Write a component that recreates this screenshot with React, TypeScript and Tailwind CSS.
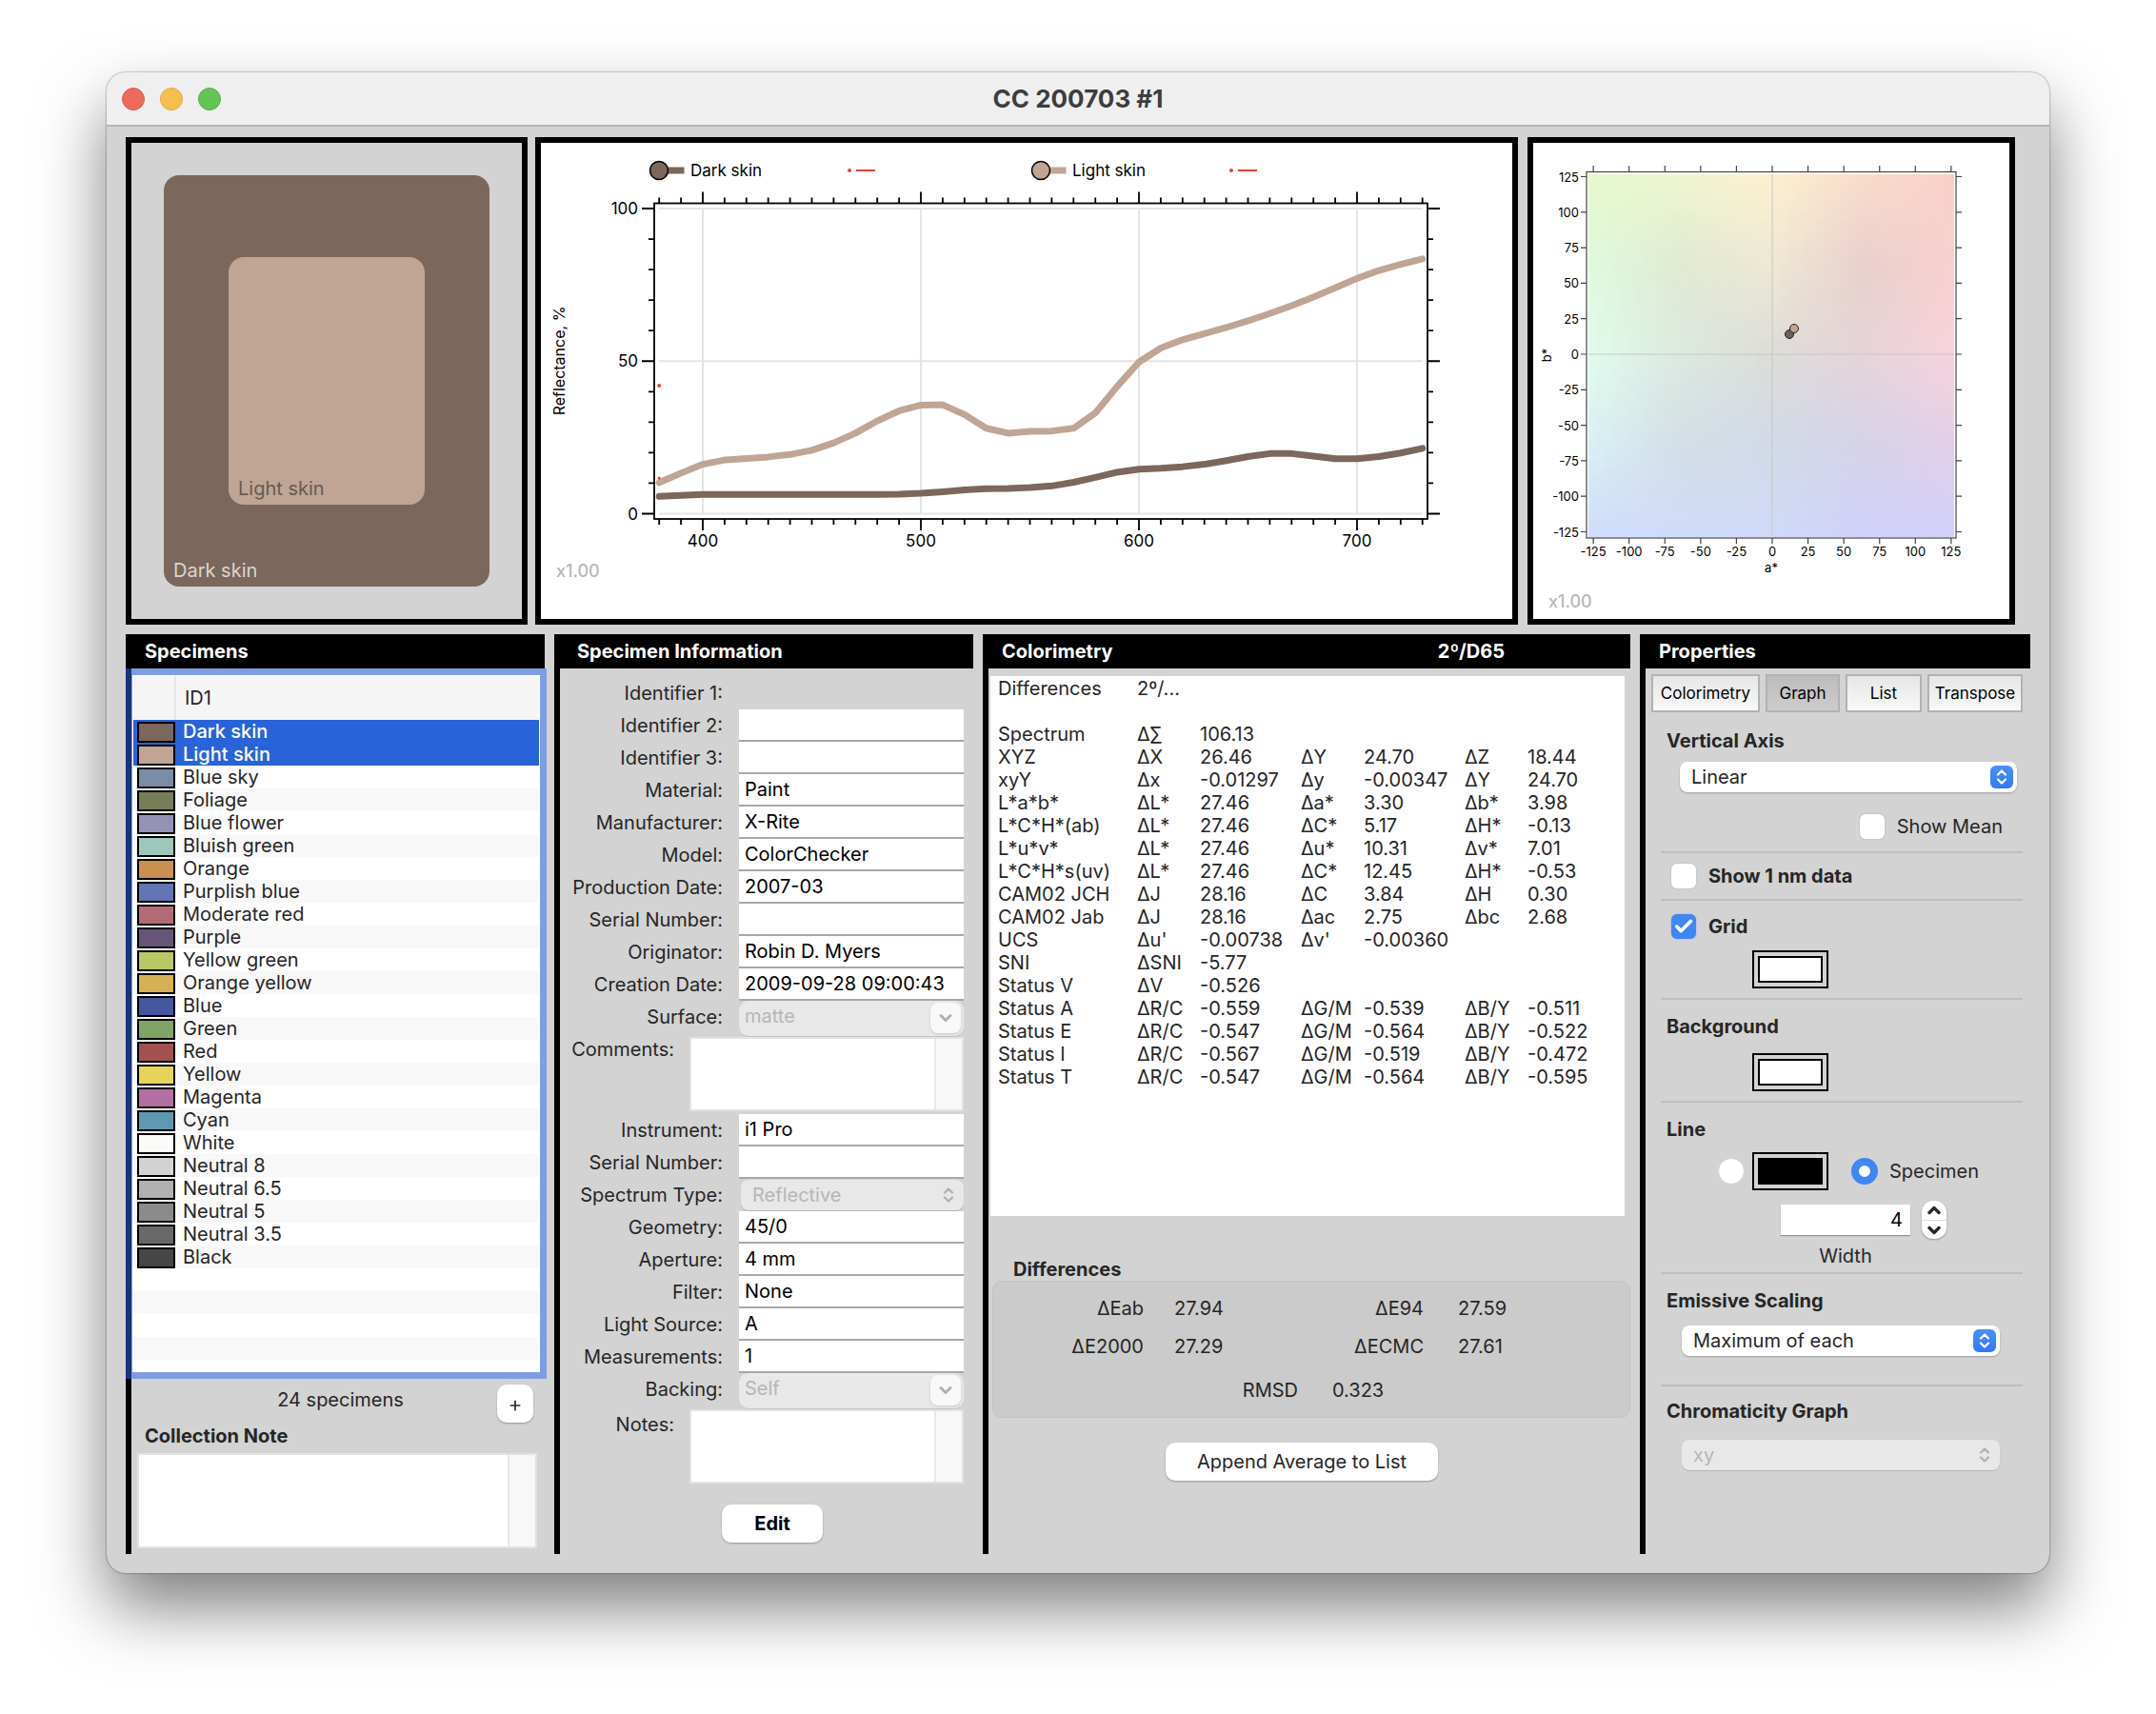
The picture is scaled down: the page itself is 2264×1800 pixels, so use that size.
import { ReactNode, useState } from "react";
import { Check, ChevronDown, ChevronUp, Plus } from "lucide-react";
import clsx from "clsx";

type Specimen = { name: string; color: string };

const specimens: Specimen[] = [
  { name: "Dark skin", color: "#7b675b" },
  { name: "Light skin", color: "#c0a594" },
  { name: "Blue sky", color: "#7b8ca6" },
  { name: "Foliage", color: "#767e59" },
  { name: "Blue flower", color: "#9592b6" },
  { name: "Bluish green", color: "#9dc7ba" },
  { name: "Orange", color: "#cb9050" },
  { name: "Purplish blue", color: "#6375b4" },
  { name: "Moderate red", color: "#b36c76" },
  { name: "Purple", color: "#665578" },
  { name: "Yellow green", color: "#b9c766" },
  { name: "Orange yellow", color: "#d5b055" },
  { name: "Blue", color: "#45579f" },
  { name: "Green", color: "#81a366" },
  { name: "Red", color: "#a15351" },
  { name: "Yellow", color: "#e6d45b" },
  { name: "Magenta", color: "#b170a1" },
  { name: "Cyan", color: "#6097b3" },
  { name: "White", color: "#fafaf8" },
  { name: "Neutral 8", color: "#d3d3d3" },
  { name: "Neutral 6.5", color: "#b1b1b1" },
  { name: "Neutral 5", color: "#8b8b8b" },
  { name: "Neutral 3.5", color: "#696969" },
  { name: "Black", color: "#464646" },
];

const colorimetry: string[][] = [
  ["Differences", "2º/..."],
  [],
  ["Spectrum", "Δ∑", "106.13"],
  ["XYZ", "ΔX", "26.46", "ΔY", "24.70", "ΔZ", "18.44"],
  ["xyY", "Δx", "-0.01297", "Δy", "-0.00347", "ΔY", "24.70"],
  ["L*a*b*", "ΔL*", "27.46", "Δa*", "3.30", "Δb*", "3.98"],
  ["L*C*H*(ab)", "ΔL*", "27.46", "ΔC*", "5.17", "ΔH*", "-0.13"],
  ["L*u*v*", "ΔL*", "27.46", "Δu*", "10.31", "Δv*", "7.01"],
  ["L*C*H*s(uv)", "ΔL*", "27.46", "ΔC*", "12.45", "ΔH*", "-0.53"],
  ["CAM02 JCH", "ΔJ", "28.16", "ΔC", "3.84", "ΔH", "0.30"],
  ["CAM02 Jab", "ΔJ", "28.16", "Δac", "2.75", "Δbc", "2.68"],
  ["UCS", "Δu'", "-0.00738", "Δv'", "-0.00360"],
  ["SNI", "ΔSNI", "-5.77"],
  ["Status V", "ΔV", "-0.526"],
  ["Status A", "ΔR/C", "-0.559", "ΔG/M", "-0.539", "ΔB/Y", "-0.511"],
  ["Status E", "ΔR/C", "-0.547", "ΔG/M", "-0.564", "ΔB/Y", "-0.522"],
  ["Status I", "ΔR/C", "-0.567", "ΔG/M", "-0.519", "ΔB/Y", "-0.472"],
  ["Status T", "ΔR/C", "-0.547", "ΔG/M", "-0.564", "ΔB/Y", "-0.595"],
];

// Reflectance in percent, 380 to 730 nm in steps of 10 nm.
const darkSkin = [
  5.7, 6, 6.3, 6.3, 6.3, 6.3, 6.3, 6.3, 6.3, 6.3, 6.3, 6.4, 6.7, 7.2, 7.8, 8.2, 8.3, 8.6, 9.1, 10.3,
  11.9, 13.6, 14.6, 14.9, 15.4, 16.2, 17.4, 18.7, 19.7, 19.7, 18.9, 18, 18, 18.7, 19.9, 21.4,
];
const lightSkin = [
  10.2, 13.3, 16.2, 17.6, 18.1, 18.6, 19.4, 20.8, 23.2, 26.4, 30.4, 33.7, 35.6, 35.7, 32.5, 28, 26.4,
  27, 27.1, 28, 33, 41.7, 49.7, 54.3, 57, 59, 61, 63.2, 65.6, 68.2, 71, 74, 77.1, 79.7, 81.7, 83.5,
];

// Colours of the a*b* plane at 128, 64, 0, -64, -128 on each axis.
const plane = [
  [[230, 248, 204], [238, 246, 208], [253, 240, 208], [249, 220, 203], [248, 208, 200]],
  [[223, 250, 222], [224, 234, 210], [238, 232, 212], [233, 208, 204], [248, 208, 207]],
  [[224, 252, 236], [220, 233, 224], [220, 220, 217], [229, 212, 217], [248, 210, 220]],
  [[217, 240, 245], [211, 222, 230], [210, 218, 232], [213, 211, 232], [226, 207, 232]],
  [[208, 220, 250], [208, 219, 249], [208, 218, 248], [208, 208, 249], [210, 208, 251]],
];

function planeColor(u: number, v: number) {
  const x = Math.min(u * 4, 3.999);
  const y = Math.min(v * 4, 3.999);
  const col = Math.floor(x);
  const row = Math.floor(y);
  const fx = x - col;
  const fy = y - row;
  const mix = [0, 1, 2].map((c) => {
    const top = plane[row][col][c] * (1 - fx) + plane[row][col + 1][c] * fx;
    const bottom = plane[row + 1][col][c] * (1 - fx) + plane[row + 1][col + 1][c] * fx;
    return Math.round(top * (1 - fy) + bottom * fy);
  });
  return `rgb(${mix.join(",")})`;
}

function range(from: number, to: number, step: number) {
  const out: number[] = [];
  for (let n = from; n <= to; n += step) out.push(n);
  return out;
}

function SpectrumChart() {
  const px = (nm: number) => 170 + (nm - 400) * 2.29;
  const py = (value: number) => 389.5 - value * 3.205;
  const line = (values: number[]) => values.map((v, i) => `${px(380 + i * 10)},${py(v)}`).join(" ");
  const legend = [
    { ...specimens[0], x: 124 },
    { ...specimens[1], x: 525 },
  ];

  return (
    <svg className="block h-full w-full" viewBox="0 0 1020 500" role="img" aria-label="Reflectance graph">
      <g stroke="#e4e4e4" strokeWidth="2">
        {[400, 500, 600, 700].map((nm) => (
          <line key={nm} x1={px(nm)} x2={px(nm)} y1={py(100)} y2={py(0)} />
        ))}
        {[0, 50, 100].map((v) => (
          <line key={v} x1={px(380)} x2={px(730)} y1={py(v)} y2={py(v)} />
        ))}
      </g>
      <g stroke="#000" strokeWidth="1.8" fill="none">
        <rect x="119" y="63.5" width="812" height="331.5" />
        {range(380, 730, 10).map((nm) => {
          const len = nm % 100 === 0 ? 12 : 6;
          return <path key={nm} d={`M${px(nm)} 63.5v${-len}M${px(nm)} 395v${len}`} />;
        })}
        {range(0, 100, 10).map((v) => {
          const len = v % 50 === 0 ? 13 : 6;
          return <path key={v} d={`M119 ${py(v)}h${-len}M931 ${py(v)}h${len}`} />;
        })}
      </g>
      <circle cx={px(380)} cy="255" r="2" fill="#e0452c" />
      <g fill="none" strokeWidth="7" strokeLinecap="round" strokeLinejoin="round">
        <polyline points={line(darkSkin)} stroke="#7b675b" />
        <polyline points={line(lightSkin)} stroke="#c0a594" />
      </g>
      <circle cx={px(380)} cy="352" r="1.5" fill="#e0452c" />
      {legend.map((item) => (
        <g key={item.name}>
          <rect x={item.x} y="25.5" width="26.5" height="7" fill={item.color} />
          <circle cx={item.x} cy="29" r="9.5" fill={item.color} stroke="#000" strokeWidth="1.5" />
          <text x={item.x + 33} y="35" fontSize="17">
            {item.name}
          </text>
          <circle cx={item.x + 200} cy="29" r="2" fill="#e0452c" />
          <line x1={item.x + 207} x2={item.x + 227} y1="29" y2="29" stroke="#e0452c" strokeWidth="1.8" />
        </g>
      ))}
      <g fontSize="17" textAnchor="end">
        {[0, 50, 100].map((v) => (
          <text key={v} x="102" y={py(v) + 6}>
            {v}
          </text>
        ))}
      </g>
      <g fontSize="17" textAnchor="middle">
        {[400, 500, 600, 700].map((nm) => (
          <text key={nm} x={px(nm)} y="424">
            {nm}
          </text>
        ))}
        <text transform="translate(25 229) rotate(-90)" fontSize="16">
          Reflectance, %
        </text>
      </g>
      <text x="16" y="456" fontSize="18" fontWeight="500" fill="#b8b8b8">
        x1.00
      </text>
    </svg>
  );
}

function ChromaChart() {
  const px = (a: number) => 251 + a * 1.503;
  const py = (b: number) => 222 - b * 1.492;
  const ticks = range(-125, 125, 25);
  const cells = 48;

  return (
    <svg className="block h-full w-full" viewBox="0 0 500 500" role="img" aria-label="a*b* graph">
      <g shapeRendering="crispEdges">
        {range(0, cells - 1, 1).map((row) =>
          range(0, cells - 1, 1).map((col) => (
            <rect
              key={`${row}-${col}`}
              x={58 + col * 8}
              y={33 + (row * 380) / cells}
              width="8"
              height={380 / cells + 0.5}
              fill={planeColor((col + 0.5) / cells, (row + 0.5) / cells)}
            />
          )),
        )}
      </g>
      <path d="M251 33v380M58 222h384" stroke="#c6c8c4" strokeWidth="1" />
      <g stroke="#444" strokeWidth="1.2" fill="none">
        <rect x="56" y="30.5" width="388" height="384.5" />
        {ticks.map((t) => (
          <path key={t} d={`M${px(t)} 30v-6M${px(t)} 415v6M56 ${py(t)}h-6M444 ${py(t)}h6`} />
        ))}
      </g>
      <g stroke="#222" strokeWidth="1">
        <circle cx="269" cy="201" r="4.5" fill="#6c625c" />
        <circle cx="274" cy="195" r="4.5" fill="#c0a594" />
      </g>
      <g fontSize="13">
        {ticks.map((t) => (
          <text key={t} x="48" y={py(t) + 5} textAnchor="end">
            {t}
          </text>
        ))}
        {ticks.map((t) => (
          <text key={t} x={px(t)} y="434" textAnchor="middle">
            {t}
          </text>
        ))}
        <text x="250" y="451" textAnchor="middle">
          a*
        </text>
        <text transform="translate(19 223) rotate(-90)" textAnchor="middle">
          b*
        </text>
      </g>
      <text x="16" y="488" fontSize="18" fontWeight="500" fill="#b8b8b8">
        x1.00
      </text>
    </svg>
  );
}

function Column({ title, aside, className, children }: { title: string; aside?: string; className?: string; children: ReactNode }) {
  return (
    <section className={clsx("flex flex-col", className)}>
      <h2 className="flex h-9 shrink-0 items-center bg-black text-xl leading-6 font-bold text-white">
        {title}
        {aside ? <span className="mr-[132px] ml-auto">{aside}</span> : null}
      </h2>
      {children}
    </section>
  );
}

function UpDown({ className }: { className?: string }) {
  return (
    <svg className={className} viewBox="0 0 12 16" fill="none" stroke="currentColor" strokeWidth="2.2" strokeLinecap="round" strokeLinejoin="round" aria-hidden="true">
      <path d="M2 5.500l4-4 4 4M2 10.500l4 4 4-4" />
    </svg>
  );
}

function Field({ id, label, value, plain }: { id: string; label: string; value?: string; plain?: boolean }) {
  return (
    <div className="flex h-[34px] items-center">
      <label htmlFor={id} className="w-[188px] shrink-0 pr-[17px] text-right">
        {label}:
      </label>
      <input
        id={id}
        readOnly
        defaultValue={value}
        className={clsx("h-[34px] min-w-0 flex-1 px-1.5 text-black outline-none", plain ? "bg-transparent" : "border-b-2 border-[#a8a8a8] bg-white")}
      />
    </div>
  );
}

function ComboField({ id, label, value }: { id: string; label: string; value: string }) {
  return (
    <div className="flex h-[38px] items-start">
      <label htmlFor={id} className="w-[188px] shrink-0 pt-[5px] pr-[17px] text-right">
        {label}:
      </label>
      <div className="grid min-w-0 flex-1">
        <select
          id={id}
          disabled
          className="col-start-1 row-start-1 h-[38px] appearance-none rounded-[10px] border-b border-[#c2c2c2] bg-[#e8e8e8] px-1.5 pb-1.5 text-[#b6b6b6] opacity-100"
        >
          <option>{value}</option>
        </select>
        <span className="pointer-events-none col-start-1 row-start-1 mt-0.5 mr-[3px] grid size-8 place-items-center justify-self-end rounded-lg bg-[#f8f8f8] shadow-sm">
          <ChevronDown className="size-5 text-[#b0b0b0]" strokeWidth={3.500} />
        </span>
      </div>
    </div>
  );
}

function NoteBox({ id, className, label }: { id: string; className?: string; label?: string }) {
  return (
    <div className={clsx("flex min-w-0 border-2 border-[#e2e2e2] bg-white", className)}>
      <textarea id={id} aria-label={label} className="min-w-0 flex-1 resize-none outline-none" />
      <div className="w-[29px] shrink-0 border-l-2 border-[#e8e8e8] bg-[#f8f8f8]" />
    </div>
  );
}

function Popup({ id, value, className }: { id: string; value: string; className: string }) {
  return (
    <div className={clsx("grid", className)}>
      <select id={id} className="col-start-1 row-start-1 h-8 appearance-none rounded-lg bg-white pr-9 pl-3 shadow-[0_1px_2px_rgba(0,0,0,0.25)]">
        <option>{value}</option>
      </select>
      <span className="pointer-events-none col-start-1 row-start-1 m-1 grid size-6 place-items-center justify-self-end rounded-md bg-linear-to-b from-[#4a91f7] to-[#3478f6] text-white">
        <UpDown className="h-4 w-3" />
      </span>
    </div>
  );
}

function DisabledPopup({ id, value, className }: { id: string; value: string; className: string }) {
  return (
    <div className={clsx("grid", className)}>
      <select
        id={id}
        disabled
        className="col-start-1 row-start-1 h-8 appearance-none rounded-lg bg-[#e8e8e8] pr-9 pl-3 text-[#b6b6b6] opacity-100 shadow-[0_1px_1px_rgba(0,0,0,0.15)]"
      >
        <option>{value}</option>
      </select>
      <span className="pointer-events-none col-start-1 row-start-1 mr-2.5 self-center justify-self-end text-[#b0b0b0]">
        <UpDown className="h-4 w-3" />
      </span>
    </div>
  );
}

function Checkbox({ label, bold, defaultChecked }: { label: string; bold?: boolean; defaultChecked?: boolean }) {
  return (
    <label className={clsx("flex items-center gap-[13px]", bold && "font-bold")}>
      <span className="grid">
        <input
          type="checkbox"
          defaultChecked={defaultChecked}
          className="peer col-start-1 row-start-1 size-[26px] appearance-none rounded-md bg-white shadow-[0_0_2px_rgba(0,0,0,0.2)] checked:bg-[#3f86f7]"
        />
        <Check className="pointer-events-none invisible col-start-1 row-start-1 size-[22px] place-self-center text-white peer-checked:visible" strokeWidth={4} />
      </span>
      {label}
    </label>
  );
}

function ColorWell({ label, fill }: { label: string; fill: string }) {
  return (
    <button type="button" aria-label={label} className="h-10 w-20 border-2 border-black p-1">
      <span className={clsx("block h-full border-2 border-black", fill)} />
    </button>
  );
}

function LineRadio({ checked, onChange, label }: { checked: boolean; onChange: () => void; label: string }) {
  return (
    <input
      type="radio"
      name="line"
      aria-label={label}
      checked={checked}
      onChange={onChange}
      className="size-7 appearance-none rounded-full border border-[#d3d3d3] bg-white checked:border-8 checked:border-[#3f86f7]"
    />
  );
}

function SpecimensColumn() {
  return (
    <Column title="Specimens" className="w-[440px] shrink-0 [&>h2]:pl-5">
      <div className="flex-1 border-l-[6px] border-black pb-1.5">
        <div className="mt-[7px] mr-[5px] ml-px h-[732px] overflow-hidden border border-white bg-white shadow-[0_0_0_7px_rgba(44,106,240,0.5)]">
          <table className="w-full table-fixed border-collapse text-left">
            <colgroup>
              <col className="w-[44px]" />
              <col />
            </colgroup>
            <thead>
              <tr className="h-[46px] bg-[#f5f5f5]">
                <th className="border-r-2 border-[#e6e6e6]" />
                <th className="pl-[9px] font-normal">ID1</th>
              </tr>
            </thead>
            <tbody>
              {specimens.map((item, i) => (
                <tr key={item.name} className={clsx("h-6", i < 2 ? "bg-[#2863d9] font-medium text-white" : i % 2 ? "bg-[#f8f8f8]" : "bg-white")}>
                  <td className="p-0 pt-0.5 pl-1">
                    <div className="h-[22px] w-10 border-2 border-black" style={{ backgroundColor: item.color }} />
                  </td>
                  <td className="p-0 pt-px pl-2 leading-[23px]">{item.name}</td>
                </tr>
              ))}
            </tbody>
          </table>
          <div className="mt-6 h-6 bg-[#f8f8f8]" />
          <div className="mt-6 h-6 bg-[#f8f8f8]" />
        </div>
        <div className="mt-[13px] mr-3 flex items-start justify-end">
          <p className="flex-1 pt-1 pl-[60px] text-center">24 specimens</p>
          <button type="button" aria-label="Add specimen" className="ml-[5px] grid h-10 w-[38px] place-items-center rounded-[10px] bg-white pt-1 shadow-[0_1px_2px_rgba(0,0,0,0.3)]">
            <Plus className="size-4" strokeWidth={2.500} />
          </button>
        </div>
        <label htmlFor="collection-note" className="mt-[2px] block pl-3.5 font-bold">
          Collection Note
        </label>
        <NoteBox id="collection-note" className="mt-[6px] mr-2 ml-[6px] h-[100px]" />
      </div>
    </Column>
  );
}

function InformationColumn() {
  return (
    <Column title="Specimen Information" className="w-[440px] shrink-0 [&>h2]:pl-6">
      <div className="flex-1 border-l-[6px] border-black pt-[9px]">
        <div className="mr-[10px]">
          <Field id="id1" label="Identifier 1" plain />
          <Field id="id2" label="Identifier 2" />
          <Field id="id3" label="Identifier 3" />
          <Field id="material" label="Material" value="Paint" />
          <Field id="manufacturer" label="Manufacturer" value="X-Rite" />
          <Field id="model" label="Model" value="ColorChecker" />
          <Field id="production" label="Production Date" value="2007-03" />
          <Field id="serial" label="Serial Number" />
          <Field id="originator" label="Originator" value="Robin D. Myers" />
          <Field id="creation" label="Creation Date" value="2009-09-28 09:00:43" />
          <ComboField id="surface" label="Surface" value="matte" />
          <div className="flex">
            <label htmlFor="comments" className="w-[136px] shrink-0 pt-px pr-4 text-right">
              Comments:
            </label>
            <NoteBox id="comments" className="h-[78px] flex-1" />
          </div>
          <div className="mt-[3px]">
            <Field id="instrument" label="Instrument" value="i1 Pro" />
            <Field id="instrument-serial" label="Serial Number" />
            <div className="flex h-[34px] items-center">
              <label htmlFor="spectrum-type" className="w-[188px] shrink-0 pr-[17px] text-right">
                Spectrum Type:
              </label>
              <DisabledPopup id="spectrum-type" value="Reflective" className="ml-0.5 flex-1" />
            </div>
            <Field id="geometry" label="Geometry" value="45/0" />
            <Field id="aperture" label="Aperture" value="4 mm" />
            <Field id="filter" label="Filter" value="None" />
            <Field id="light" label="Light Source" value="A" />
            <Field id="measurements" label="Measurements" value="1" />
            <ComboField id="backing" label="Backing" value="Self" />
          </div>
          <div className="flex">
            <label htmlFor="notes" className="w-[136px] shrink-0 pt-1 pr-4 text-right">
              Notes:
            </label>
            <NoteBox id="notes" className="h-[78px] flex-1" />
          </div>
        </div>
        <div className="mt-[22px] ml-3 flex justify-center">
          <button type="button" className="h-10 w-[106px] rounded-[10px] bg-white font-bold text-black shadow-[0_1px_2px_rgba(0,0,0,0.3)]">
            Edit
          </button>
        </div>
      </div>
    </Column>
  );
}

function ColorimetryColumn() {
  return (
    <Column title="Colorimetry" aside="2º/D65" className="min-w-0 flex-1 [&>h2]:pl-5">
      <div className="flex-1 border-l-[6px] border-black pt-2">
        <div className="mr-1.5 ml-0.5 h-[567px] bg-white pt-px pl-2">
          <table className="w-full table-fixed border-collapse text-left whitespace-nowrap">
            <colgroup>
              <col className="w-[146px]" />
              <col className="w-[66px]" />
              <col className="w-[106px]" />
              <col className="w-[66px]" />
              <col className="w-[106px]" />
              <col className="w-[66px]" />
              <col />
            </colgroup>
            <tbody>
              {colorimetry.map((row, r) => (
                <tr key={r} className="h-6">
                  {range(0, 6, 1).map((c) => (
                    <td key={c} className="p-0">
                      {row[c]}
                    </td>
                  ))}
                </tr>
              ))}
            </tbody>
          </table>
        </div>
        <h3 className="mt-11 pl-[26px] font-bold">Differences</h3>
        <div className="ml-1 rounded-[10px] border border-[#c4c4c4] bg-[#cbcbcb] py-4">
          <dl className="grid grid-cols-[158px_1fr_164px_216px] gap-y-4">
            <dt className="text-right">ΔEab</dt>
            <dd className="pl-8">27.94</dd>
            <dt className="text-right">ΔE94</dt>
            <dd className="pl-9">27.59</dd>
            <dt className="text-right">ΔE2000</dt>
            <dd className="pl-8">27.29</dd>
            <dt className="text-right">ΔECMC</dt>
            <dd className="pl-9">27.61</dd>
          </dl>
          <dl className="mt-[22px] ml-1 flex justify-center gap-9">
            <dt>RMSD</dt>
            <dd>0.323</dd>
          </dl>
        </div>
        <div className="mt-[26px] mr-4 flex justify-center">
          <button type="button" className="h-10 w-[286px] rounded-[10px] bg-white shadow-[0_1px_2px_rgba(0,0,0,0.3)]">
            Append Average to List
          </button>
        </div>
      </div>
    </Column>
  );
}

const tabs = [
  { name: "Colorimetry", width: "w-[114px]" },
  { name: "Graph", width: "w-[78px]" },
  { name: "List", width: "w-20" },
  { name: "Transpose", width: "w-[100px]" },
];

function PropertiesColumn() {
  const [tab, setTab] = useState("Graph");
  const [line, setLine] = useState("specimen");
  const [width, setWidth] = useState(4);

  return (
    <Column title="Properties" className="w-[410px] shrink-0 [&>h2]:pl-5">
      <div className="flex-1 border-l-[6px] border-black pt-1.5 pr-2 pl-4">
        <div className="-ml-[10px] flex justify-between text-[17px] text-black">
          {tabs.map((item) => (
            <button
              key={item.name}
              type="button"
              onClick={() => setTab(item.name)}
              className={clsx(
                "h-10 border-2 border-[#b2b2b2]",
                item.width,
                tab === item.name ? "bg-linear-to-b from-[#bcbcbc] to-[#cdcdcd]" : "bg-linear-to-b from-[#e6e6e6] to-[#f8f8f8]",
              )}
            >
              {item.name}
            </button>
          ))}
        </div>

        <div className="border-b-2 border-[#bebebe] pt-[18px] pb-[13px]">
          <label htmlFor="vertical-axis" className="block pl-1.5 font-bold">
            Vertical Axis
          </label>
          <Popup id="vertical-axis" value="Linear" className="mt-2.5 mr-1.5 ml-5" />
          <div className="mt-[23px] mr-[21px] flex justify-end">
            <Checkbox label="Show Mean" />
          </div>
        </div>

        <div className="border-b-2 border-[#bebebe] py-[11px] pl-[11px]">
          <Checkbox label="Show 1 nm data" bold />
        </div>

        <div className="border-b-2 border-[#bebebe] pt-[14px] pb-2.5">
          <div className="pl-[11px]">
            <Checkbox label="Grid" bold defaultChecked />
          </div>
          <div className="mt-3 flex pl-24">
            <ColorWell label="Grid color" fill="bg-white" />
          </div>
        </div>

        <div className="border-b-2 border-[#bebebe] pt-4 pb-2.5">
          <h3 className="pl-1.5 font-bold">Background</h3>
          <div className="mt-4 flex pl-24">
            <ColorWell label="Background color" fill="bg-white" />
          </div>
        </div>

        <div className="border-b-2 border-[#bebebe] pt-4 pb-[5px]">
          <h3 className="pl-1.5 font-bold">Line</h3>
          <div className="mt-3 flex items-center pl-[60px]">
            <LineRadio label="Fixed color" checked={line === "fixed"} onChange={() => setLine("fixed")} />
            <div className="ml-2 flex">
              <ColorWell label="Line color" fill="bg-black" />
            </div>
            <label className="ml-6 flex items-center gap-3">
              <LineRadio label="Specimen" checked={line === "specimen"} onChange={() => setLine("specimen")} />
              Specimen
            </label>
          </div>
          <div className="mt-[11px] flex items-center pl-[126px]">
            <input id="line-width" value={width} readOnly className="h-8 w-[136px] bg-white px-2 text-right text-black shadow-[0_1px_1px_rgba(0,0,0,0.3)]" />
            <div className="ml-3 flex h-10 w-[26px] flex-col divide-y divide-[#dcdcdc] overflow-hidden rounded-xl bg-white shadow-[0_1px_2px_rgba(0,0,0,0.3)]">
              <button type="button" aria-label="Increase width" className="grid flex-1 place-items-center" onClick={() => setWidth(width + 1)}>
                <ChevronUp className="size-5" strokeWidth={4} />
              </button>
              <button type="button" aria-label="Decrease width" className="grid flex-1 place-items-center" onClick={() => setWidth(width - 1)}>
                <ChevronDown className="size-5" strokeWidth={4} />
              </button>
            </div>
          </div>
          <label htmlFor="line-width" className="mt-1.5 ml-[126px] block w-[136px] text-center">
            Width
          </label>
        </div>

        <div className="border-b-2 border-[#bebebe] pt-4 pb-[30px]">
          <label htmlFor="scaling" className="block pl-1.5 font-bold">
            Emissive Scaling
          </label>
          <Popup id="scaling" value="Maximum of each" className="mt-3.5 mr-6 ml-[22px]" />
        </div>

        <div className="pt-3.5">
          <label htmlFor="chromaticity" className="block pl-1.5 font-bold">
            Chromaticity Graph
          </label>
          <DisabledPopup id="chromaticity" value="xy" className="mt-[18px] mr-6 ml-[22px]" />
        </div>
      </div>
    </Column>
  );
}

export default function App() {
  return (
    <div className="min-h-screen bg-white px-28 pt-[76px] pb-[148px] font-['Inter','Noto_Sans',sans-serif] text-xl leading-6 text-[#262626]">
      <main className="overflow-hidden rounded-[20px] bg-[#d3d3d3] shadow-[0_0_2px_rgba(0,0,0,0.6),0_36px_70px_rgba(0,0,0,0.5)]">
        <header className="grid h-[57px] grid-cols-[1fr_auto_1fr] items-center border-b-2 border-[#b4b4b4] bg-[#efefef] px-4">
          <div className="flex gap-4">
            <button type="button" aria-label="Close" className="size-6 rounded-full border border-[#d65a4f] bg-[#ed6a5e]" />
            <button type="button" aria-label="Minimize" className="size-6 rounded-full border border-[#dfab43] bg-[#f5bf4f]" />
            <button type="button" aria-label="Zoom" className="size-6 rounded-full border border-[#54b047] bg-[#62c554]" />
          </div>
          <h1 className="text-[26px] font-bold text-[#3d3d3d]">CC 200703 #1</h1>
        </header>

        <div className="px-5 pt-[11px] pb-5">
          <div className="mr-4 flex h-[512px]">
            <div className="w-[422px] shrink-0 border-[6px] border-black p-[34px]">
              <div className="grid h-full grid-rows-[86px_1fr_86px] rounded-2xl bg-[#7b675b]">
                <div className="row-start-2 mx-[68px] flex items-end rounded-2xl bg-[#c0a594] px-2.5 pb-[5px] text-[#665a52]">Light skin</div>
                <div className="row-start-3 flex items-end px-2.5 pb-[5px] text-[#dcd5cf]">Dark skin</div>
              </div>
            </div>
            <div className="ml-2 min-w-0 flex-1 border-[6px] border-black bg-white">
              <SpectrumChart />
            </div>
            <div className="ml-2.5 w-[512px] shrink-0 border-[6px] border-black bg-white">
              <ChromaChart />
            </div>
          </div>

          <div className="mt-2.5 flex gap-2.5">
            <SpecimensColumn />
            <InformationColumn />
            <ColorimetryColumn />
            <PropertiesColumn />
          </div>
        </div>
      </main>
    </div>
  );
}
